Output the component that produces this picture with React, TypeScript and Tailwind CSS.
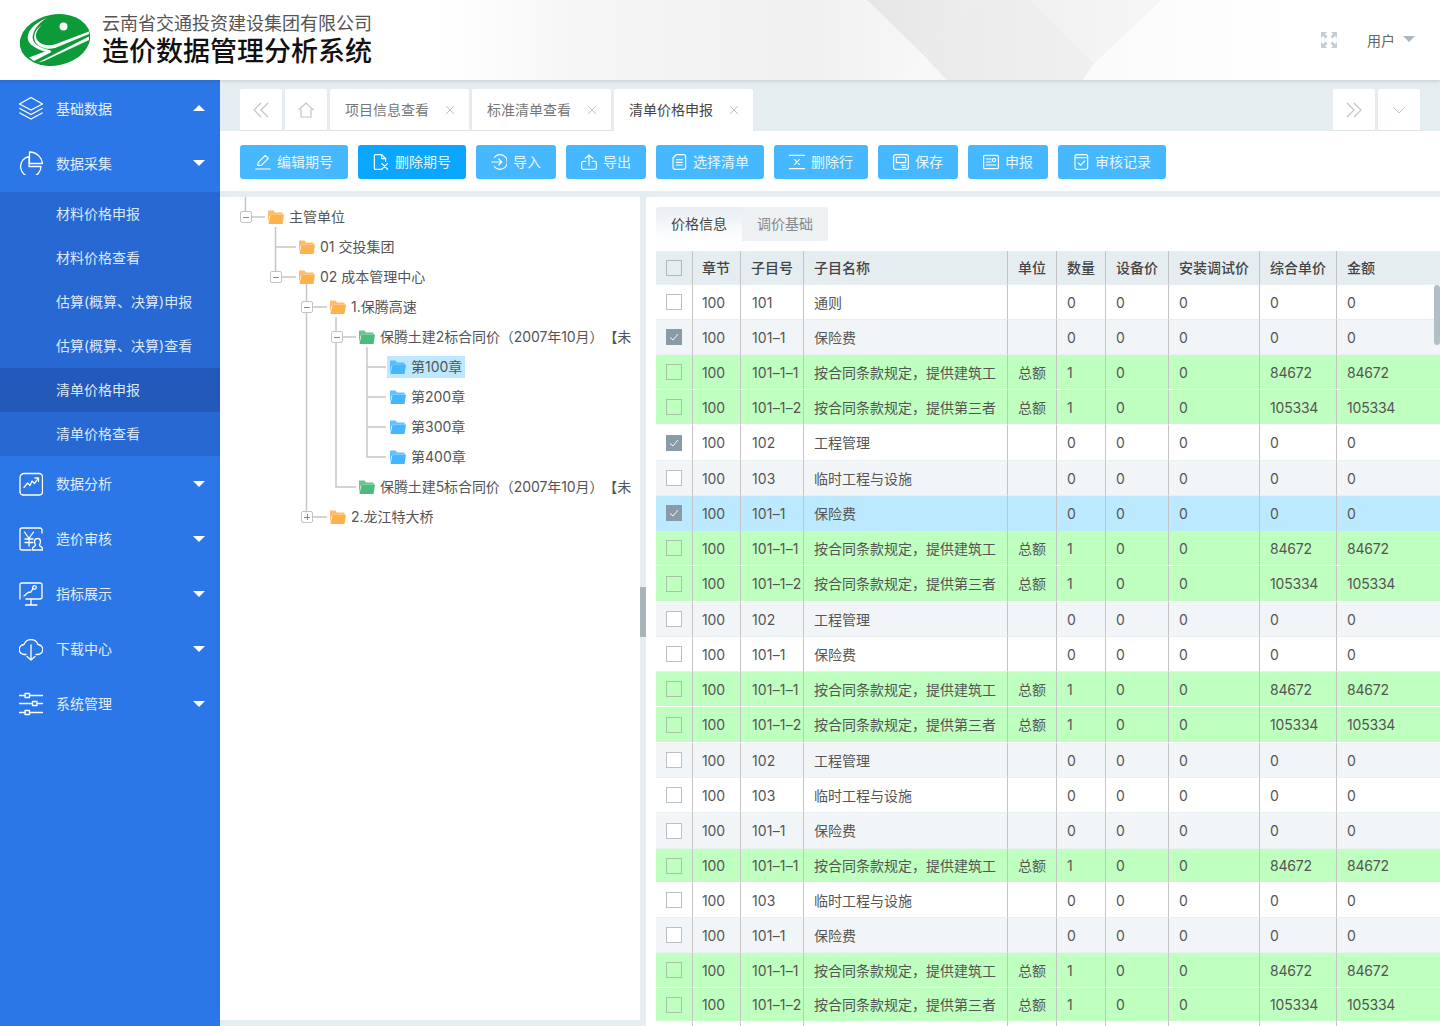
import React from "react";

const S = { fill: "none", stroke: "currentColor", strokeLinecap: "round", strokeLinejoin: "round" } as const;

function Ic({ size = 16, sw = 1.3, className = "", children }: { size?: number; sw?: number; className?: string; children: React.ReactNode }) {
  return (
    <svg width={size} height={size} viewBox="0 0 24 24" {...S} strokeWidth={sw} className={`shrink-0 ${className}`}>
      {children}
    </svg>
  );
}

const SideIcons: Record<string, React.ReactNode> = {
  layers: (<><path d="M12 1.500 23.500 8 12 14 .5 8Z" /><path d="M.8 12.500 12 18.500 23.200 12.500" /><path d="M.8 17 12 23 23.200 17" /></>),
  pie: (<><path d="M10 5.500A10.200 10.200 0 1 0 22 15.500H10Z" /><path d="M10.500 1A13 13 0 0 1 23.500 12.500H10.500Z" /></>),
  chart: (<><path d="M1 20V5.500A4 4 0 0 1 5 1.500H20a3.500 3.500 0 0 1 3.500 3.500V20a3 3 0 0 1-3 3H4" /><path d="M1 20 C1 21.500 2.500 23 4 23" /><path d="M5 15.500 8.500 11 11 13.500 13 9 15.500 11.500 19 6.500" /><path d="M16 6H19.500V9.500" /></>),
  yen: (<><path d="M23 6V3A2 2 0 0 0 21 1H3A2 2 0 0 0 1 3V21A2 2 0 0 0 3 23H12" /><path d="M5.500 5 10 11.500 14.500 5" /><path d="M10 11.500V19" /><path d="M6 12H14M6 15.500H14" /><path d="M18.500 11.500a3 3 0 0 1 3 3c0 2-1 2.800-1 3.800 0 1 2.800 1.200 3 3.200v1.500h-10v-1.500c.2-2 3-2.200 3-3.200 0-1-1-1.800-1-3.800a3 3 0 0 1 3-3Z" /></>),
  monitor: (<><path d="M1 17V3A2 2 0 0 1 3 1H21A2 2 0 0 1 23 3V15A2 2 0 0 1 21 17H7" /><path d="M12 18V22M6.500 23H18" /><path d="M5 14 9 10.500 12 10 14 6.500" /><circle cx="15.500" cy="5.500" r="1.800" /></>),
  cloud: (<><path d="M7 17.500H5.500A5 5 0 0 1 5 7.500 7.500 7.500 0 0 1 19 7.500 5 5 0 0 1 18.500 17.500H17" /><path d="M12 8V23M8 19.500 12 23 16 19.500" /></>),
  sliders: (<><path d="M.5 3.500H6M11 3.500H23.500" /><rect x="6" y="1.500" width="4.500" height="4" /><path d="M.5 11.500H13M18 11.500H23.500" /><rect x="13.500" y="9.500" width="4.500" height="4" /><path d="M.5 20.500H6M11 20.500H23.500" /><rect x="6" y="18.500" width="4.500" height="4" /></>),
};

function Caret({ up = false, gray = false }: { up?: boolean; gray?: boolean }) {
  return up ? (
    <span className="w-0 h-0 border-x-[6px] border-x-transparent border-b-[6px] border-b-white" />
  ) : (
    <span className={`w-0 h-0 border-x-[6px] border-x-transparent border-t-[6px] ${gray ? "border-t-[#aab6bd]" : "border-t-white"}`} />
  );
}

function SideItem({ icon, label, up }: { icon: string; label: string; up?: boolean }) {
  return (
    <div className="h-[55px] flex items-center pl-[19px] pr-[15px] text-[14px] text-[#e3edfc]">
      <Ic size={24} className="text-white">{SideIcons[icon]}</Ic>
      <span className="ml-[13px] flex-1">{label}</span>
      <Caret up={up} />
    </div>
  );
}

function Logo() {
  return (
    <svg width="70" height="54" viewBox="0 0 70 54" className="shrink-0">
      <ellipse cx="35" cy="27" rx="35.500" ry="25.500" transform="rotate(-11 35 27)" fill="#0d9b3a" />
      <circle cx="43.500" cy="13.500" r="4" fill="#fff" />
      <path d="M27 5C14 10 6 19 8 27 10 33 19 37 27 39L31 37.500C24 36 15 33 13 27 11 20 18 10 27 5Z" fill="#fff" />
      <path d="M22 12C15 18 14 25 19 29 24 33 30 33 36 31L69 18.500 69 21 35 35C28 37 20 35 16 30 12 24 15 16 22 12Z" fill="#fff" />
      <path d="M9 44.500 29 37 31.500 39 14 48Z" fill="#fff" />
      <path d="M69 23.500 69 27 24 48 18 49.500Z" fill="#fff" />
    </svg>
  );
}

function HeaderBg() {
  return (
    <svg className="absolute inset-0 w-full h-full" viewBox="0 0 1440 80" preserveAspectRatio="none">
      <defs>
        <linearGradient id="g1" gradientUnits="userSpaceOnUse" x1="440" x2="950" y1="0" y2="0">
          <stop offset="0" stopColor="#ffffff" />
          <stop offset="0.25" stopColor="#f6f6f6" />
          <stop offset="0.72" stopColor="#f0f0f0" />
          <stop offset="1" stopColor="#f9f9f9" />
        </linearGradient>
        <linearGradient id="gA" gradientUnits="userSpaceOnUse" x1="867" x2="978" y1="0" y2="0">
          <stop offset="0" stopColor="#e6e6e6" />
          <stop offset="1" stopColor="#ededed" />
        </linearGradient>
        <linearGradient id="gB" gradientUnits="userSpaceOnUse" x1="923" x2="1095" y1="0" y2="0">
          <stop offset="0" stopColor="#eaeaea" />
          <stop offset="1" stopColor="#f0f0f0" />
        </linearGradient>
        <linearGradient id="gC" gradientUnits="userSpaceOnUse" x1="1032" x2="1162" y1="0" y2="0">
          <stop offset="0" stopColor="#f1f1f1" />
          <stop offset="1" stopColor="#f6f6f6" />
        </linearGradient>
        <linearGradient id="gD" gradientUnits="userSpaceOnUse" x1="1083" x2="1290" y1="0" y2="0">
          <stop offset="0" stopColor="#fafafa" />
          <stop offset="1" stopColor="#ffffff" />
        </linearGradient>
      </defs>
      <path d="M440 0H867L947 80H440Z" fill="url(#g1)" />
      <path d="M923 55 947 80H900Z" fill="#f8f8f8" />
      <path d="M867 0H978L923 55Z" fill="url(#gA)" />
      <path d="M978 0H1032L1095 63 1083 80H947L923 55Z" fill="url(#gB)" />
      <path d="M1032 0H1162L1095 63Z" fill="url(#gC)" />
      <path d="M1162 0H1290V80H1083L1095 63Z" fill="url(#gD)" />
    </svg>
  );
}

function TabIconBox({ children }: { children: React.ReactNode }) {
  return <div className="w-[42px] h-[41px] bg-white rounded-t-[2px] flex items-center justify-center text-[#bcc6cd] shadow-[0_1px_1px_rgba(0,0,0,0.05)]">{children}</div>;
}

function Tab({ label, active }: { label: string; active?: boolean }) {
  return (
    <div className={`w-[139px] bg-white rounded-t-[2px] flex items-center pl-[15px] text-[14px] ${active ? "h-[42px] pb-px text-[#444]" : "h-[41px] text-[#777] shadow-[0_1px_1px_rgba(0,0,0,0.05)]"}`}>
      <span className="w-[84px] whitespace-nowrap">{label}</span>
      <svg width="10" height="10" viewBox="0 0 10 10" className="ml-[16px] text-[#bcbcbc]" fill="none" stroke="currentColor" strokeWidth="0.9">
        <path d="M1 1 9 9M9 1 1 9" />
      </svg>
    </div>
  );
}

const BtnIcons: Record<string, React.ReactNode> = {
  edit: (<><path d="M4 17 5 12.500 15.500 2 20 6.500 9.500 17Z" /><path d="M1 22.500H23" /></>),
  delete: (<><path d="M13 23H3.500A1.500 1.500 0 0 1 2 21.500V2.500A1.500 1.500 0 0 1 3.500 1H13L19 7V11" /><path d="M13 1V7H19" /><path d="M13 14 22 23M22 14 13 23" /></>),
  import: (<><path d="M5 5A11 11 0 1 1 5 19" /><path d="M1 12H16M11.500 7.500 16 12 11.500 16.500" /></>),
  export: (<><path d="M7 11H3.500A2.500 2.500 0 0 0 1 13.500V20.500A2.500 2.500 0 0 0 3.500 23H20.500A2.500 2.500 0 0 0 23 20.500V13.500A2.500 2.500 0 0 0 20.500 11H17" /><path d="M12 17V1.500M6.500 6.500 12 1.500 17.500 6.500" /></>),
  list: (<><path d="M8 1H19A3 3 0 0 1 22 4V20A3 3 0 0 1 19 23H6A3 3 0 0 1 3 20V6Z" /><path d="M8 8.500H17M8 12.500H17M8 16.500H17" /></>),
  delrow: (<><path d="M0 2H24M0 22H24" /><path d="M8.500 8.500 15.500 15.500M15.500 8.500 8.500 15.500" /></>),
  save: (<><rect x="1" y="1" width="22" height="22" rx="3" /><path d="M5 5H19V13H5Z" /><path d="M12.500 17H19M14.500 20H19" /></>),
  report: (<><rect x="1" y="2" width="22" height="20" rx="1.500" /><path d="M5 7.500H12M5 12H12M5 16.500H19" /><circle cx="16.500" cy="9" r="2.500" /></>),
  audit: (<><rect x="3" y="1" width="19" height="22" rx="3" /><path d="M3 5.500H22" /><path d="M8 13.500 11.500 17 17.500 10.500" /></>),
};

function Btn({ icon, label, width, active }: { icon: string; label: string; width: string; active?: boolean }) {
  return (
    <button className={`${width} h-[34px] rounded-[3px] flex items-center justify-center gap-[6px] text-[14px] text-[#e6f6ff] ${active ? "bg-[#0aa6ff]" : "bg-[#46b8ff]"}`}>
      <Ic size={16} sw={1.700} className="text-white">{BtnIcons[icon]}</Ic>
      <span className="whitespace-nowrap pb-[2px]">{label}</span>
    </button>
  );
}

function Folder({ color }: { color: string }) {
  return (
    <svg width="16" height="16" viewBox="0 0 16 16" className="shrink-0">
      <path d="M0 1.500H5.500L7 3.500H14.500V5.500H3L1.500 7 0 14Z" fill={color} opacity="0.85" />
      <path d="M2.500 5.500H16L14.500 15H0.500Z" fill={color} />
    </svg>
  );
}

function Box({ plus }: { plus?: boolean }) {
  return (
    <span className="w-[12px] h-[12px] border border-[#c4c4c4] rounded-[2px] bg-white flex items-center justify-center relative shrink-0">
      <span className="w-[6px] h-px bg-[#888]" />
      {plus && <span className="absolute w-px h-[6px] bg-[#888]" />}
    </span>
  );
}

const ORANGE = "#fdb24e";
const GREEN = "#4dbb7b";
const BLUE = "#44b7ff";

const treeRows = [
  { pad: "pl-[20px]", box: "w-[28px]", hasBox: true, color: ORANGE, text: "主管单位" },
  { pad: "pl-[79px]", box: "", hasBox: false, color: ORANGE, text: "01 交投集团" },
  { pad: "pl-[50px]", box: "w-[29px]", hasBox: true, color: ORANGE, text: "02 成本管理中心" },
  { pad: "pl-[81px]", box: "w-[29px]", hasBox: true, color: ORANGE, text: "1.保腾高速" },
  { pad: "pl-[111px]", box: "w-[28px]", hasBox: true, color: GREEN, text: "保腾土建2标合同价（2007年10月）【未", tight: true },
  { pad: "pl-[170px]", box: "", hasBox: false, color: BLUE, text: "第100章", selected: true },
  { pad: "pl-[170px]", box: "", hasBox: false, color: BLUE, text: "第200章" },
  { pad: "pl-[170px]", box: "", hasBox: false, color: BLUE, text: "第300章" },
  { pad: "pl-[170px]", box: "", hasBox: false, color: BLUE, text: "第400章" },
  { pad: "pl-[139px]", box: "", hasBox: false, color: GREEN, text: "保腾土建5标合同价（2007年10月）【未", tight: true },
  { pad: "pl-[81px]", box: "w-[29px]", hasBox: true, plus: true, color: ORANGE, text: "2.龙江特大桥" },
];

function TreeLines() {
  return (
    <svg className="absolute left-0 top-0" width="420" height="340" fill="none" stroke="#c6c6c6" strokeWidth="1.500">
      <path d="M25.500 0V15M32 20H45" />
      <path d="M55.500 30V75M55.500 50H76M62 80H76" />
      <path d="M86.500 86V315M93 110H107M93 320H107" />
      <path d="M116 120V290H136M123 140H136" />
      <path d="M147 150V260H166M147 170H166M147 200H166M147 230H166" />
    </svg>
  );
}

type Kind = "a" | "b" | "g" | "s";
type Row = { k: Kind; h: string; no: string; name: string; unit?: string; qty?: string; price?: string; ck?: boolean };
const D = { a: "101", b: "101–1", c: "101–1–1", d: "101–1–2", e: "102", f: "103" };
const G1 = { k: "g" as Kind, no: D.c, name: "按合同条款规定，提供建筑工", unit: "总额", qty: "1", price: "84672" };
const G2 = { k: "g" as Kind, no: D.d, name: "按合同条款规定，提供第三者", unit: "总额", qty: "1", price: "105334" };
const H35 = "h-[35px]";
const rows: Row[] = [
  { k: "a", h: H35, no: D.a, name: "通则" },
  { k: "b", h: H35, no: D.b, name: "保险费", ck: true },
  { ...G1, h: H35 },
  { ...G2, h: H35 },
  { k: "a", h: "h-[36px]", no: D.e, name: "工程管理", ck: true },
  { k: "b", h: H35, no: D.f, name: "临时工程与设施" },
  { k: "s", h: H35, no: D.b, name: "保险费", ck: true },
  { ...G1, h: H35 },
  { ...G2, h: "h-[36px]" },
  { k: "b", h: H35, no: D.e, name: "工程管理" },
  { k: "a", h: H35, no: D.b, name: "保险费" },
  { ...G1, h: H35 },
  { ...G2, h: "h-[36px]" },
  { k: "b", h: H35, no: D.e, name: "工程管理" },
  { k: "a", h: H35, no: D.f, name: "临时工程与设施" },
  { k: "b", h: "h-[36px]", no: D.b, name: "保险费" },
  { ...G1, h: "h-[34px]" },
  { k: "a", h: H35, no: D.f, name: "临时工程与设施" },
  { k: "b", h: H35, no: D.b, name: "保险费" },
  { ...G1, h: H35 },
  { ...G2, h: "h-[34px]" },
];

const GRID = "grid grid-cols-[37px_48px_63px_204px_49px_49px_63px_91px_77px_103px]";
const rowBg: Record<Kind, string> = { a: "bg-white", b: "bg-[#f2f5f7]", g: "bg-[#bfffbf]", s: "bg-[#bde9ff]" };
const rowLine: Record<Kind, string> = { a: "border-b-[#e9eef1]", b: "border-b-[#e9eef1]", g: "border-b-white", s: "border-b-[#bde9ff]" };

function Cell({ line, last, children, className = "pl-[10px]" }: { line: string; last?: boolean; children?: React.ReactNode; className?: string }) {
  return (
    <div className={`border-b ${line} ${last ? "" : "border-r border-r-[#c4c4c4]"} flex items-center whitespace-nowrap overflow-hidden ${className}`}>
      {children}
    </div>
  );
}

function Check({ on, kind }: { on?: boolean; kind: Kind | "h" }) {
  if (on)
    return (
      <span className="w-[16px] h-[16px] bg-[#8a9ba8] flex items-center justify-center">
        <svg width="12" height="12" viewBox="0 0 12 12" fill="none" stroke="#fff" strokeWidth="0.9"><path d="M2 6.500 5 9 10 3" /></svg>
      </span>
    );
  if (kind === "h") return <span className="w-[16px] h-[16px] border border-[#b4b8bc]" />;
  return <span className={`w-[16px] h-[16px] border ${kind === "g" ? "border-[#a8c4a8]" : "border-[#bcc0c4] bg-white"}`} />;
}

const headers = ["章节", "子目号", "子目名称", "单位", "数量", "设备价", "安装调试价", "综合单价", "金额"];
const NUM = "tracking-[-0.2px]";

export default function App() {
  return (
    <div className="w-[1440px] h-[1026px] overflow-hidden flex flex-col font-[Inter,'Noto_Sans_CJK_SC',sans-serif] bg-[#e6edf1]">
      <header className="h-[80px] shrink-0 bg-white relative flex items-center pl-[20px] pr-[25px] shadow-[0_1px_4px_rgba(0,0,0,0.15)] z-10">
        <HeaderBg />
        <div className="relative flex items-center">
          <Logo />
          <div className="ml-[12px] w-[270px] mt-[1px]">
            <div className="text-[18px] leading-[22px] text-[#555] whitespace-nowrap">云南省交通投资建设集团有限公司</div>
            <div className="text-[27px] leading-[34px] font-medium text-[#111] whitespace-nowrap">造价数据管理分析系统</div>
          </div>
        </div>
        <div className="relative ml-auto flex items-center">
          <svg width="16" height="16" viewBox="0 0 16 16" fill="#c3ccd2">
            <path d="M0 0H6L4 2 6.500 4.500 4.500 6.500 2 4 0 6Z" />
            <path d="M16 0H10L12 2 9.500 4.500 11.500 6.500 14 4 16 6Z" />
            <path d="M0 16H6L4 14 6.500 11.500 4.500 9.500 2 12 0 10Z" />
            <path d="M16 16H10L12 14 9.500 11.500 11.500 9.500 14 12 16 10Z" />
          </svg>
          <span className="ml-[30px] text-[14px] text-[#666]">用户</span>
          <span className="ml-[8px] -mt-[2px] flex"><Caret gray /></span>
        </div>
      </header>

      <div className="flex flex-1 min-h-0">
        <aside className="w-[220px] shrink-0 bg-[#2c77e8] pt-[0.5px]">
          <SideItem icon="layers" label="基础数据" up />
          <SideItem icon="pie" label="数据采集" />
          <div className="mt-[1.500px] text-[14px] text-[#dce8fb]">
            {["材料价格申报", "材料价格查看", "估算(概算、决算)申报", "估算(概算、决算)查看", "清单价格申报", "清单价格查看"].map((t, i) => (
              <div key={t} className={`h-[44px] pb-[2px] flex items-center pl-[56px] ${i === 4 ? "bg-[#2359b8]" : "bg-[#2768d3]"}`}>{t}</div>
            ))}
          </div>
          <SideItem icon="chart" label="数据分析" />
          <SideItem icon="yen" label="造价审核" />
          <SideItem icon="monitor" label="指标展示" />
          <SideItem icon="cloud" label="下载中心" />
          <SideItem icon="sliders" label="系统管理" />
        </aside>

        <main className="flex-1 min-w-0 flex flex-col">
          <div className="h-[51px] shrink-0 pt-[9px] px-[20px] flex items-start gap-[3px]">
            <TabIconBox>
              <svg width="16" height="16" viewBox="0 0 16 16" fill="none" stroke="currentColor" strokeWidth="1.200"><path d="M8 1 1 8 8 15M15 1 8 8 15 15" /></svg>
            </TabIconBox>
            <TabIconBox>
              <svg width="16" height="16" viewBox="0 0 16 16" fill="none" stroke="currentColor" strokeWidth="1.200"><path d="M0.500 8 8 1 15.500 8M3 7V15H13V7" /></svg>
            </TabIconBox>
            <Tab label="项目信息查看" />
            <Tab label="标准清单查看" />
            <Tab label="清单价格申报" active />
            <div className="ml-auto flex gap-[3px]">
              <TabIconBox>
                <svg width="16" height="16" viewBox="0 0 16 16" fill="none" stroke="currentColor" strokeWidth="1.200"><path d="M1 1 8 8 1 15M8 1 15 8 8 15" /></svg>
              </TabIconBox>
              <TabIconBox>
                <svg width="14" height="14" viewBox="0 0 14 14" fill="none" stroke="currentColor" strokeWidth="1"><path d="M1 4 7 10 13 4" /></svg>
              </TabIconBox>
            </div>
          </div>

          <div className="h-[60px] shrink-0 bg-white pl-[20px] pt-[14px] flex items-start gap-[10px]">
            <Btn icon="edit" label="编辑期号" width="w-[108px]" />
            <Btn icon="delete" label="删除期号" width="w-[108px]" active />
            <Btn icon="import" label="导入" width="w-[80px]" />
            <Btn icon="export" label="导出" width="w-[80px]" />
            <Btn icon="list" label="选择清单" width="w-[108px]" />
            <Btn icon="delrow" label="删除行" width="w-[94px]" />
            <Btn icon="save" label="保存" width="w-[80px]" />
            <Btn icon="report" label="申报" width="w-[80px]" />
            <Btn icon="audit" label="审核记录" width="w-[108px]" />
          </div>

          <div className="flex-1 min-h-0 mt-[6px] flex">
            <div className="w-[420px] shrink-0 h-[823px] bg-white relative overflow-hidden text-[14px] text-[#555] pt-[5px]">
              <TreeLines />
              {treeRows.map((r) => (
                <div key={r.text} className={`h-[30px] flex items-center relative ${r.pad}`}>
                  {r.hasBox && <span className={`${r.box} flex`}><Box plus={r.plus} /></span>}
                  {r.selected ? (
                    <span className="flex items-center bg-[#bde8ff] h-[22px] px-[3px] -ml-[3px]">
                      <Folder color={r.color} />
                      <span className="ml-[5px] pb-[2px] whitespace-nowrap">{r.text}</span>
                    </span>
                  ) : (
                    <>
                      <Folder color={r.color} />
                      <span className={`ml-[5px] pb-[2px] whitespace-nowrap ${r.tight ? "tracking-[-0.08px] [text-spacing-trim:space-all]" : ""}`}>{r.text}</span>
                    </>
                  )}
                </div>
              ))}
            </div>

            <div className="w-[6px] shrink-0 pt-[390px]">
              <div className="h-[50px] bg-[#a9b3ba]" />
            </div>

            <div className="flex-1 min-w-0 bg-white relative overflow-hidden pl-[10px] pt-[10px] flex flex-col">
              <div className="flex w-[172px] h-[34px] rounded-[3px] overflow-hidden text-[14px] shrink-0">
                <div className="w-[86px] pb-[2px] flex items-center justify-center text-[#444] bg-gradient-to-b from-[#e9eef2] to-white">价格信息</div>
                <div className="w-[86px] pb-[2px] flex items-center justify-center text-[#888] bg-[#edf1f4]">调价基础</div>
              </div>
              <div className="mt-[10px] flex-1 min-h-0 flex flex-col text-[14px] text-[#555]">
                <div className={`${GRID} h-[34px] shrink-0 bg-[#e6edf1] text-[#444] font-medium`}>
                  <Cell line="border-b-[#e6edf1]"><Check kind="h" /></Cell>
                  {headers.map((h, i) => (
                    <Cell key={h} line="border-b-[#e6edf1]" last={i === headers.length - 1} className={i === 0 ? "pl-[9px]" : "pl-[10px]"}>{h}</Cell>
                  ))}
                </div>
                {rows.map((r, i) => {
                  const line = rowLine[r.k];
                  const q = r.qty ?? "0";
                  const p = r.price ?? "0";
                  return (
                    <div key={i} className={`${GRID} ${r.h} shrink-0 ${rowBg[r.k]}`}>
                      <Cell line={line}><Check on={r.ck} kind={r.k} /></Cell>
                      <Cell line={line} className={`pl-[9px] ${NUM}`}>100</Cell>
                      <Cell line={line} className="pl-[11px] tracking-[0.15px]">{r.no}</Cell>
                      <Cell line={line}>{r.name}</Cell>
                      <Cell line={line}>{r.unit}</Cell>
                      <Cell line={line}>{q}</Cell>
                      <Cell line={line}>0</Cell>
                      <Cell line={line}>0</Cell>
                      <Cell line={line} className={`pl-[10px] ${NUM}`}>{p}</Cell>
                      <Cell line={line} last className={`pl-[10px] ${NUM}`}>{p}</Cell>
                    </div>
                  );
                })}
                <div className={`${GRID} flex-1`}>
                  {Array.from({ length: 9 }).map((_, i) => (
                    <div key={i} className="border-r border-r-[#c4c4c4]" />
                  ))}
                </div>
              </div>
              <div className="absolute right-0 top-[88px] w-[6px] h-[60px] rounded-[3px] bg-[#b3bfc7]" />
            </div>
          </div>
        </main>
      </div>
    </div>
  );
}
